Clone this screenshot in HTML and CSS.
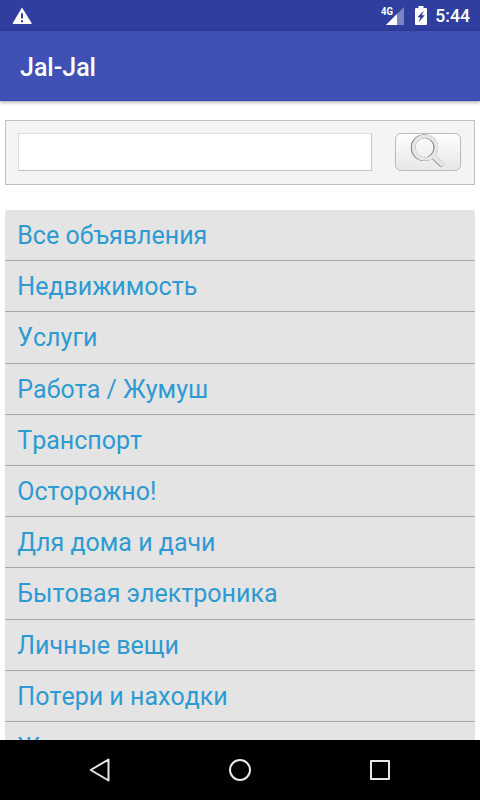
FILE: index.html
```
<!DOCTYPE html>
<html lang="ru">
<head>
<meta charset="utf-8">
<title>Jal-Jal</title>
<link rel="stylesheet" href="styles.css">
</head>
<body>
<div class="screen">
  <div class="status">
    <svg class="warning" width="20" height="18" viewBox="0 0 20 18"><path fill="#fff" fill-rule="evenodd" d="M10 .5 L19.6 16 Q20 17 19 17 H1.5 Q.5 17 .8 16Z M9 6.2V11.5H11V6.2Z M9 13.3V15.2H11V13.3Z"/></svg>
    <div class="status-right">
      <svg class="signal" width="24" height="20" viewBox="0 0 24 20"><path fill="#7b84c4" d="M23 1V19H5Z"/><path fill="#fff" d="M16 8V19H5Z"/><text class="network" x="0" y="9" textLength="12" lengthAdjust="spacingAndGlyphs">4G</text></svg>
      <svg class="battery" width="12" height="19" viewBox="0 0 12 19"><path fill="#fff" d="M3.5 0H8.5V2H11Q12 2 12 3V18Q12 19 11 19H1Q0 19 0 18V3Q0 2 1 2H3.5Z"/><path fill="#303f9f" d="M8.8 4.7 2.3 11.3H5.3L3.7 16.2 9.8 9.3H6.8Z"/></svg>
      <span class="clock">5:44</span>
    </div>
  </div>
  <header class="bar"><h1>Jal-Jal</h1></header>
  <main class="content">
    <form class="search">
      <input class="field" type="text" aria-label="Поиск">
      <button class="go" type="button" aria-label="Найти">
        <svg width="40" height="36" viewBox="0 0 40 36" fill="none" stroke-linecap="round">
          <g class="lens">
            <path d="M23.5 22.5 32 30.3" stroke-width="4.4"/>
            <circle cx="15" cy="13.6" r="11.4" stroke-width="3.6"/>
          </g>
        </svg>
      </button>
    </form>
    <ul class="list">
      <li>Все объявления</li>
      <li>Недвижимость</li>
      <li>Услуги</li>
      <li>Работа / Жумуш</li>
      <li>Транспорт</li>
      <li>Осторожно!</li>
      <li>Для дома и дачи</li>
      <li>Бытовая электроника</li>
      <li>Личные вещи</li>
      <li>Потери и находки</li>
      <li>Животные</li>
    </ul>
  </main>
  <nav class="nav">
    <svg width="24" height="26" viewBox="0 0 24 26"><path d="M20.5 2.5V23.5L2.7 13Z"/></svg>
    <svg width="24" height="26" viewBox="0 0 24 26"><circle cx="12" cy="13" r="10"/></svg>
    <svg width="24" height="26" viewBox="0 0 24 26"><path d="M3 4H21V22H3Z"/></svg>
  </nav>
</div>
</body>
</html>
```
FILE: styles.css
```
* { box-sizing: border-box; }
body { margin: 0; font-family: Roboto, sans-serif; background: #fff; }
.screen { width: 480px; height: 800px; display: flex; flex-direction: column; overflow: hidden; }
.status { flex: none; height: 31px; padding: 0 10px 0 12px; background: #303f9f; display: flex; justify-content: space-between; align-items: flex-start; }
.warning { margin-top: 7px; }
.status-right { display: flex; align-items: flex-start; color: #fff; }
.signal { margin-top: 6px; }
.network { font: 700 10px Roboto, sans-serif; fill: #fff; }
.battery { margin: 6px 8px 0 10px; }
.clock { font-size: 17.6px; font-weight: 500; line-height: 33px; }
.bar { flex: none; height: 70px; background: #3f51b5; border-bottom: 1px solid #3044b5; box-shadow: 0 1px 4px rgba(0, 0, 0, .4); padding-left: 20px; z-index: 1; }
h1 { margin: 0; color: #fff; font-size: 25px; font-weight: 500; line-height: 73px; }
.content { flex: 1; min-height: 0; overflow: hidden; padding: 19px 5px 0; }
.search { height: 65px; margin: 0 0 25px; padding: 12px 13px 0 12px; display: flex; justify-content: space-between; align-items: flex-start; background: #f4f4f4; border: 1px solid #c0c0c0; }
.field { width: 354px; height: 38px; padding: 0 8px; background: #fff; border: 1px solid #c4c4c4; border-top-color: #dcdcdc; border-left-color: #dcdcdc; border-radius: 1px; font: 24px Roboto, sans-serif; }
.go { width: 66px; height: 38px; padding: 0 0 0 14px; border: 1px solid #bbb; border-radius: 6px; background: linear-gradient(#fefefe, #e7e7e7); display: flex; align-items: flex-start; }
.go svg { display: block; flex: none; overflow: visible; }
.lens { stroke: #e6e6e6; filter: drop-shadow(0 0 .6px #777) drop-shadow(-.6px .8px .7px #888); }
.list { list-style: none; margin: 0; padding: 0; background: #e4e4e4; border-radius: 3px; }
.list li { height: 51.2px; padding-left: 12.3px; border-bottom: 1px solid #a8a8a8; color: #2e9ad2; font-size: 25px; line-height: 51px; font-kerning: none; }
.nav { flex: none; height: 60px; background: #000; display: flex; justify-content: center; align-items: center; gap: 116px; }
.nav svg { fill: none; stroke: #e8e8e8; stroke-width: 2; stroke-linejoin: round; }
```
